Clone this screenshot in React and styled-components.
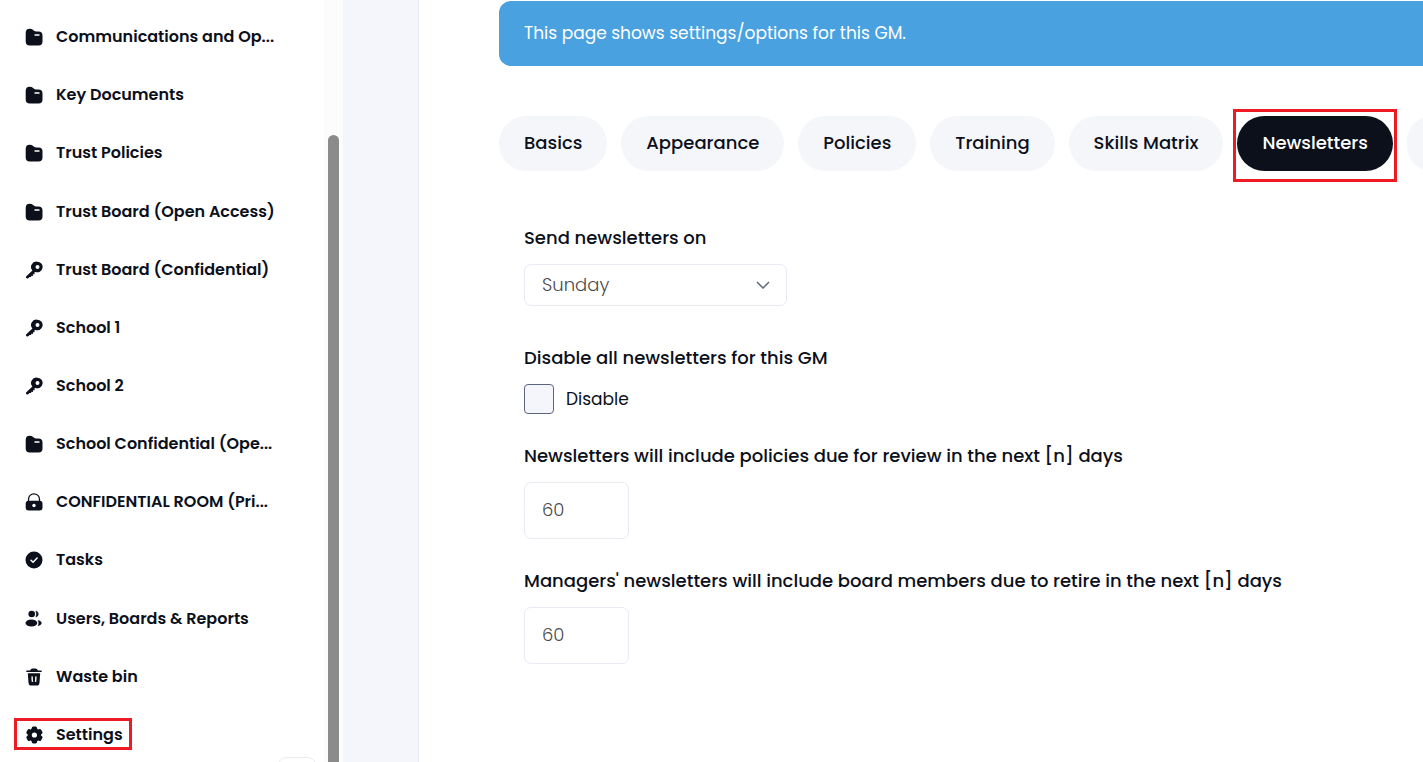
import React from "react";
import styled, { createGlobalStyle, css } from "styled-components";

const GlobalStyle = createGlobalStyle`
    *, *::before, *::after {
        box-sizing: border-box;
    }
    body {
        margin: 0;
        overflow: hidden;
        background: #ffffff;
        color: #0c101b;
        font-family: Poppins, Inter, "Open Sans", sans-serif;
    }
    button, input, select {
        font-family: inherit;
    }
`

const highlight = css`
    position: relative;
    &::after {
        content: "";
        position: absolute;
        inset: ${props => props.$inset};
        border: 3px solid #ed1c24;
        pointer-events: none;
    }
`

const Page = styled.div`
    display: flex;
    height: 100vh;
    overflow: hidden;
`

const Sidebar = styled.aside`
    display: flex;
    flex: 0 0 343px;
    overflow: hidden;
`

const Nav = styled.nav`
    display: flex;
    flex: 1;
    flex-direction: column;
    min-width: 0;
    padding: 8px 7px 0px 25px;
`

const NavLink = styled.a`
    display: flex;
    flex: 1 0 58px;
    align-items: center;
    align-self: flex-start;
    max-width: 256px;
    color: inherit;
    font-size: 16px;
    font-weight: 600;
    line-height: 26px;
    text-decoration: none;
`

const NavItem = styled.span`
    display: flex;
    align-items: center;
    gap: 13px;
    min-width: 0;
    ${props => props.$inset && highlight}
`

const NavText = styled.span`
    white-space: nowrap;
`

const Icon = styled.svg`
    flex: none;
    width: 18px;
    height: 18px;
    fill: currentColor;
`

const CollapseButton = styled.button`
    flex: 0 0 40px;
    align-self: flex-end;
    width: 40px;
    margin: -7px 0px -35px;
    border: 1px solid #e9eaf4;
    border-radius: 10px;
    background: #ffffff;
`

const ScrollTrack = styled.div`
    flex: 0 0 19px;
    padding: 135px 4px 0px;
    background: #fcfcfc;
`

const ScrollThumb = styled.div`
    height: 100%;
    border-radius: 6px 6px 0px 0px;
    background: #8b8b8b;
`

const Gutter = styled.div`
    flex: 0 0 76px;
    border-right: 1px solid #e8eaf5;
    background: #f4f6fb;
`

const Main = styled.main`
    flex: 1;
    min-width: 0;
    padding: 1px 0px 0px 80px;
    overflow: hidden;
`

const Banner = styled.div`
    padding: 19px 25px 20px;
    border-radius: 12px 0px 0px 12px;
    background: #4aa1df;
    color: #ffffff;
    font-size: 17px;
    line-height: 26px;
`

const Tabs = styled.div`
    display: flex;
    gap: 14px;
    margin-top: 50px;
`

const Tab = styled.button`
    flex: none;
    height: 55px;
    padding: 0px 25px 2px;
    border: none;
    border-radius: 28px;
    background: ${props => props.$active ? "#0c101b" : "#f4f6fa"};
    color: ${props => props.$active ? "#ffffff" : "#0c101b"};
    font-size: 18px;
    font-weight: 500;
    ${props => props.$active && highlight}
`

const Form = styled.form`
    display: flex;
    flex-direction: column;
    align-items: flex-start;
    gap: 30px;
    padding: 55px 25px;
`

const Field = styled.div`
    display: flex;
    flex-direction: column;
    align-items: flex-start;
    gap: 14px;
    margin-bottom: ${props => props.$spaced ? "10px" : "0px"};
`

const Label = styled.label`
    font-size: 18px;
    font-weight: 500;
    line-height: 24px;
    white-space: nowrap;
`

const SelectBox = styled.div`
    display: grid;
    align-items: center;
    width: 263px;
    & > * {
        grid-area: 1 / 1;
    }
`

const Select = styled.select`
    width: 100%;
    height: 42px;
    padding: 0px 17px 2px;
    border: 1px solid #e8eaf5;
    border-radius: 7px;
    appearance: none;
    background: #ffffff;
    color: #4a4a4a;
    font-size: 18px;
    font-weight: 300;
`

const Chevron = styled.svg`
    justify-self: end;
    width: 14px;
    height: 8px;
    margin-right: 17px;
    fill: none;
    stroke: #5f6778;
    stroke-width: 1.5;
    pointer-events: none;
`

const CheckLabel = styled.label`
    display: flex;
    align-items: center;
    gap: 12px;
    font-size: 17px;
    line-height: 26px;
`

const Checkbox = styled.input`
    width: 30px;
    height: 30px;
    margin: 0px;
    border: 1px solid #5c6480;
    border-radius: 4px;
    appearance: none;
    background: #f4f6fb;
`

const NumberInput = styled.input`
    width: 105px;
    height: 57px;
    padding: 0px 17px 2px;
    border: 1px solid #e8eaf5;
    border-radius: 7px;
    background: #ffffff;
    color: #4a4a4a;
    font-size: 18px;
    font-weight: 300;
`

const icons = {
    folder: (
        <>
            <path d="M.7 5Q.7.7 4.5.7q2.500 0 3.600 1.400 1.300 1.300 2.700 1.300h2.700q4 0 4 4v6q0 4-4 4H4.700q-4 0-4-4Z" />
            <path d="M10 7h4" stroke="#fff" strokeWidth="1.4" strokeLinecap="round" />
        </>
    ),
    key: (
        <path fillRule="evenodd" d="M12.2.7a5.300 5.300 0 1 1-1.900 10.200l-.9.7.2 1.600-1.700.1.100 1.600-1.700-.1-.2 1.300-1.500-.1-1.400 1.200q-1.500.7-2.100-.5-.4-.9.500-1.700l5.800-5.500A5.300 5.300 0 0 1 12.200.7Zm.3 3.300a2 2 0 1 0 0 4 2 2 0 0 0 0-4Z" />
    ),
    lock: (
        <>
            <path d="M3.500 9V6.300a5.500 5.500 0 0 1 11 0V9" fill="none" stroke="currentColor" strokeWidth="1.3" />
            <rect x=".7" y="7.7" width="16.8" height="9.8" rx="3" />
            <circle cx="9" cy="12.5" r="1.700" fill="#fff" />
        </>
    ),
    check: (
        <>
            <circle cx="9" cy="9" r="8.5" />
            <path d="m6 9.200 2.100 2 4-4.100" fill="none" stroke="#fff" strokeWidth="1.5" strokeLinecap="round" />
        </>
    ),
    users: (
        <>
            <circle cx="6.700" cy="4" r="3.300" />
            <path d="M10.900.9a3.200 3.200 0 0 1 0 6.200q1.200-3.100 0-6.200Z" stroke="currentColor" strokeWidth=".5" />
            <ellipse cx="6.400" cy="13" rx="5.900" ry="3.500" />
            <path d="M13.100 10.500c4.400.5 4.400 4.500 0 5.200q1.500-2.700 0-5.200Z" stroke="currentColor" strokeWidth=".4" />
        </>
    ),
    trash: (
        <>
            <path d="M5 2.500Q6 .4 7.500.4h3q1.500 0 2.500 2.100h3q.9 0 .9.800t-.9.800H2q-.9 0-.9-.8t.9-.8Z" />
            <path d="M2.800 5.200h12.400l-.7 9.500q-.2 2.900-2.900 2.900H6.400q-2.700 0-2.900-2.900Z" />
            <path d="M7.200 8.400q-.3 3 .3 5.400M10.800 8.400q.3 3-.3 5.400" fill="none" stroke="#fff" strokeWidth="1.4" />
        </>
    ),
    gear: (
        <>
            <circle cx="9.400" cy="9" r="6.800" />
            {[0, 60, 120, 180, 240, 300].map(angle => (
                <rect key={angle} x="6.700" y=".6" width="5.400" height="5" rx="1.600" transform={`rotate(${angle} 9.4 9)`} />
            ))}
            <circle cx="9.400" cy="9" r="2.600" fill="#fff" />
        </>
    ),
}

const links = [
    {icon: "folder", text: "Communications and Op..."},
    {icon: "folder", text: "Key Documents"},
    {icon: "folder", text: "Trust Policies"},
    {icon: "folder", text: "Trust Board (Open Access)"},
    {icon: "key", text: "Trust Board (Confidential)"},
    {icon: "key", text: "School 1"},
    {icon: "key", text: "School 2"},
    {icon: "folder", text: "School Confidential (Ope..."},
    {icon: "lock", text: "CONFIDENTIAL ROOM (Pri..."},
    {icon: "check", text: "Tasks"},
    {icon: "users", text: "Users, Boards & Reports"},
    {icon: "trash", text: "Waste bin"},
    {icon: "gear", text: "Settings", inset: "-4px -9px -2px -11px"},
]

const tabs = ["Basics", "Appearance", "Policies", "Training", "Skills Matrix", "Newsletters"]

function SideNav() {
    return(
        <Sidebar>
            <Nav>
                {links.map(({icon, text, inset}) => (
                    <NavLink href="#" key={text}>
                        <NavItem $inset={inset}>
                            <Icon viewBox="0 0 18 18" aria-hidden="true">{icons[icon]}</Icon>
                            <NavText>{text}</NavText>
                        </NavItem>
                    </NavLink>
                ))}
                <CollapseButton type="button" aria-label="Collapse menu" />
            </Nav>
            <ScrollTrack>
                <ScrollThumb />
            </ScrollTrack>
        </Sidebar>
    )
}

function NewsletterForm() {
    return(
        <Form>
            <Field $spaced>
                <Label htmlFor="day">Send newsletters on</Label>
                <SelectBox>
                    <Select id="day" defaultValue="Sunday">
                        <option>Sunday</option>
                    </Select>
                    <Chevron viewBox="0 0 14 8" aria-hidden="true">
                        <path d="m1 1 6 6 6-6" />
                    </Chevron>
                </SelectBox>
            </Field>
            <Field>
                <Label htmlFor="disable">Disable all newsletters for this GM</Label>
                <CheckLabel>
                    <Checkbox type="checkbox" id="disable" />
                    Disable
                </CheckLabel>
            </Field>
            <Field>
                <Label htmlFor="policies">Newsletters will include policies due for review in the next [n] days</Label>
                <NumberInput id="policies" type="text" inputMode="numeric" defaultValue="60" />
            </Field>
            <Field>
                <Label htmlFor="members">Managers' newsletters will include board members due to retire in the next [n] days</Label>
                <NumberInput id="members" type="text" inputMode="numeric" defaultValue="60" />
            </Field>
        </Form>
    )
}

function App() {
    return(
        <>
            <GlobalStyle />
            <Page>
                <SideNav />
                <Gutter />
                <Main>
                    <Banner>This page shows settings/options for this GM.</Banner>
                    <Tabs>
                        {tabs.map(name => (
                            <Tab
                                type="button"
                                key={name}
                                $active={name === "Newsletters"}
                                $inset="-7px -4px -11px -4px"
                            >
                                {name}
                            </Tab>
                        ))}
                        <Tab type="button" aria-label="More settings" />
                    </Tabs>
                    <NewsletterForm />
                </Main>
            </Page>
        </>
    )
}

export default App
